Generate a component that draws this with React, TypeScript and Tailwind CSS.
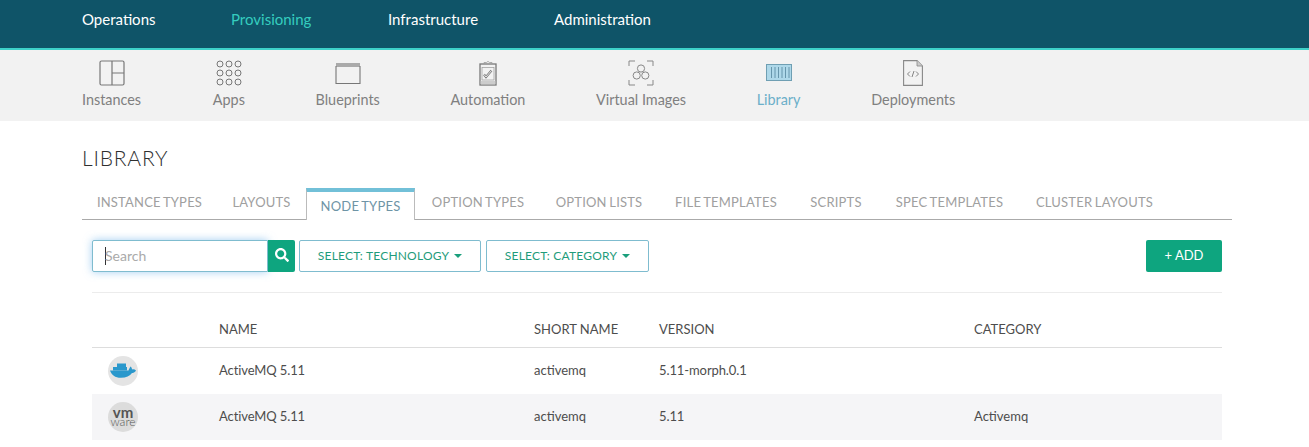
import { FaSearch } from "react-icons/fa";

const TOP_NAV = [
  { label: "Operations", width: "w-[149px]" },
  { label: "Provisioning", width: "w-[157px]", active: true },
  { label: "Infrastructure", width: "w-[166px]" },
  { label: "Administration", width: "w-auto" },
];

const TABS = [
  { label: "INSTANCE TYPES", width: "w-[135px]" },
  { label: "LAYOUTS", width: "w-[89px]" },
  { label: "NODE TYPES", width: "w-[109px]", active: true },
  { label: "OPTION TYPES", width: "w-[126px]" },
  { label: "OPTION LISTS", width: "w-[116px]" },
  { label: "FILE TEMPLATES", width: "w-[138px]" },
  { label: "SCRIPTS", width: "w-[82px]" },
  { label: "SPEC TEMPLATES", width: "w-[145px]" },
  { label: "CLUSTER LAYOUTS", width: "w-[145px]" },
];

function InstancesIcon() {
  return (
    <svg width="26" height="26" viewBox="0 0 26 26" fill="none" stroke="#777" strokeWidth="1.2">
      <rect x="1" y="1" width="24" height="24" rx="1.5" />
      <path d="M13 1v24M13 13h12" />
    </svg>
  );
}

function AppsIcon() {
  const dots = [4, 13, 22];
  return (
    <svg width="26" height="26" viewBox="0 0 26 26" fill="none" stroke="#777" strokeWidth="1">
      {dots.map((y) =>
        dots.map((x) => <circle key={`${x}-${y}`} cx={x} cy={y} r="3" />),
      )}
    </svg>
  );
}

function BlueprintsIcon() {
  return (
    <svg width="26" height="26" viewBox="0 0 26 26" fill="none">
      <rect x="1" y="3" width="24" height="4" fill="#aaa" />
      <path d="M1 6v17.500h24V6" stroke="#777" strokeWidth="1.1" />
    </svg>
  );
}

function AutomationIcon() {
  return (
    <svg width="26" height="26" viewBox="0 0 26 26" fill="none" stroke="#777">
      <rect x="5" y="4" width="16" height="21" strokeWidth="1.3" />
      <path d="M9 4V2.500h2.500a1.700 1.700 0 0 1 3 0H17V4" strokeWidth="0.8" stroke="#999" />
      <rect x="7" y="7.500" width="12" height="12.500" strokeWidth="0.7" stroke="#999" />
      <path d="M9 14.500l2 2.500 5.500-6.500" strokeWidth="2.200" />
      <path d="M9 14.500l2 2.500 5.500-6.500" strokeWidth="0.9" stroke="#f2f2f2" />
      <rect x="5.700" y="21" width="14.600" height="3.300" fill="#ccc" stroke="none" />
    </svg>
  );
}

function VirtualImagesIcon() {
  return (
    <svg width="26" height="26" viewBox="0 0 26 26" fill="none" stroke="#888" strokeWidth="1">
      <path d="M1 6V1h6M19 1h6v5M25 20v5h-6M7 25H1v-5" />
      <circle cx="13" cy="8.500" r="3.600" />
      <circle cx="8.700" cy="15.500" r="3.600" />
      <circle cx="17.300" cy="15.500" r="3.600" />
    </svg>
  );
}

function LibraryIcon() {
  return (
    <svg width="26" height="17" viewBox="0 0 26 17" fill="none">
      <rect x="0.500" y="0.500" width="25" height="16" fill="#aed8e9" stroke="#6f9fb3" />
      <path d="M5.500 3v11M9 3v11M12.500 3v11M16 3v11M19.500 3v11M23 3v11" stroke="#5f8fa5" strokeWidth="0.9" />
    </svg>
  );
}

function DeploymentsIcon() {
  return (
    <svg width="20" height="26" viewBox="0 0 20 26" fill="none" stroke="#888">
      <path d="M0.600 0.600H14L19.400 6V25.400H0.600Z" strokeWidth="1.100" />
      <path d="M14 0.600V6H19.400" fill="#ccc" strokeWidth="0.800" />
      <path d="M7 11.500l-2.500 2.500L7 16.500M13 11.500l2.500 2.500-2.500 2.500M11 11l-2 6" stroke="#666" strokeWidth="0.800" />
    </svg>
  );
}

const SUB_NAV = [
  { label: "Instances", icon: <InstancesIcon /> },
  { label: "Apps", icon: <AppsIcon />, nudge: "ml-[1px]" },
  { label: "Blueprints", icon: <BlueprintsIcon /> },
  { label: "Automation", icon: <AutomationIcon /> },
  { label: "Virtual Images", icon: <VirtualImagesIcon /> },
  { label: "Library", icon: <LibraryIcon />, active: true },
  { label: "Deployments", icon: <DeploymentsIcon /> },
];

const ROWS = [
  { logo: "docker", height: "h-[47px]", name: "ActiveMQ 5.11", shortName: "activemq", version: "5.11-morph.0.1", category: "" },
  { logo: "vmware", height: "h-[46px]", name: "ActiveMQ 5.11", shortName: "activemq", version: "5.11", category: "Activemq" },
];

function Caret() {
  return <span className="ml-[5px] inline-block h-0 w-0 border-x-4 border-t-4 border-x-transparent border-t-[#1a9f7c]" />;
}

function SelectButton({ label, width }: { label: string; width: string }) {
  return (
    <button
      type="button"
      className={`${width} flex h-8 items-center justify-center rounded-[2px] border border-[#7fbccf] bg-white text-[12px] tracking-[0.2px] text-[#1f9c7b]`}
    >
      {label}
      <Caret />
    </button>
  );
}

function RowLogo({ kind }: { kind: string }) {
  if (kind === "docker") {
    return (
      <div className="flex h-[30px] w-[30px] items-center justify-center rounded-full bg-[#e4e4e4]">
        <svg width="26" height="15" viewBox="0 0 26 15" fill="#2a98cc">
          <path d="M0 7.500H18.500C19 6 20 4 20.500 3.500C21.500 4.200 22 5.500 22 6.500C23.500 6 25 6.500 26 7.500C25 9.500 23 10 22 10C20 13 16 14.800 11 14.800C5 14.800 1.500 12 0 7.500Z" />
          <path d="M3 4H17V7.500H3ZM7 0.500H16V4H7Z" />
        </svg>
      </div>
    );
  }
  return (
    <div className="h-[30px] w-[30px] rounded-full bg-[#dcdcdc]">
      <svg width="30" height="30" viewBox="0 0 30 30" fill="#555" textAnchor="middle">
        <text x="15" y="15.500" fontSize="15" fontWeight="700">vm</text>
        <text x="15" y="24" fontSize="12" fontWeight="300">ware</text>
      </svg>
    </div>
  );
}

export default function App() {
  return (
    <div className="h-[447px] overflow-hidden bg-white font-['Lato',sans-serif]">
      {/* Top nav */}
      <div className="flex h-[50px] items-start border-b-[2px] border-[#3ed1c9] bg-[#0f5468] pt-[10px] pl-[82px] text-[15px] leading-[18px]">
        {TOP_NAV.map((item) => (
          <span
            key={item.label}
            className={`${item.width} ${item.active ? "text-[#35cdbf]" : "text-white"}`}
          >
            {item.label}
          </span>
        ))}
      </div>

      {/* Section nav */}
      <div className="flex h-[71px] gap-[70.700px] bg-[#f2f2f2] pl-[82px] text-[14.400px] leading-[18px]">
        {SUB_NAV.map((item) => (
          <div key={item.label} className={`flex flex-col items-center ${item.nudge ?? ""}`}>
            <div className="flex h-[44px] items-center pt-[1px]">{item.icon}</div>
            <span className={`mt-[-3px] ${item.active ? "text-[#6bafc9]" : "text-[#808080]"}`}>
              {item.label}
            </span>
          </div>
        ))}
      </div>

      <div className="pr-[77px] pl-[82px]">
        <h1 className="pt-[26px] text-[21px] leading-[22px] font-light tracking-[0.8px] text-[#2f2f2f]">LIBRARY</h1>

        {/* Tabs */}
        <div className="mt-[19px] flex h-[32px] items-end border-b border-[#aaa] tracking-[0.2px] [word-spacing:-1px]">
          {TABS.map((tab) =>
            tab.active ? (
              <div
                key={tab.label}
                className={`${tab.width} relative top-[1px] flex h-[32px] items-center justify-center border-x border-t-4 border-x-[#bbb] border-t-[#72c0d8] bg-white pt-[1px] text-[13px] text-[#6e94a6]`}
              >
                {tab.label}
              </div>
            ) : (
              <div
                key={tab.label}
                className={`${tab.width} flex h-[31px] shrink-0 items-center justify-center pb-[2px] text-[13px] text-[#a0a0a0]`}
              >
                {tab.label}
              </div>
            ),
          )}
        </div>

        <div className="pl-[10px] pr-[10px]">
          {/* Toolbar */}
          <div className="flex items-center pt-[20px] pb-[20px] border-b border-[#ececec]">
            <div className="flex h-8 w-[176px] items-center rounded-l-[2px] border border-[#7fbccf] bg-white pl-[12px] text-[14px] text-[#aaa] shadow-[0_0_8px_rgba(102,175,233,0.6)]">
              <span className="h-[18px] w-px bg-[#333]" />
              <span className="ml-[-1px] pb-[2px]">Search</span>
            </div>
            <button
              type="button"
              className="flex h-8 w-[27px] items-start justify-center rounded-r-[2px] bg-[#0ea57f] pt-[8px] text-white"
            >
              <FaSearch className="text-[14px]" />
            </button>
            <div className="ml-[4px]">
              <SelectButton label="SELECT: TECHNOLOGY" width="w-[182px]" />
            </div>
            <div className="ml-[5px]">
              <SelectButton label="SELECT: CATEGORY" width="w-[163px]" />
            </div>
            <button
              type="button"
              className="ml-auto h-8 w-[76px] rounded-[2px] bg-[#0ea57f] text-[13px] text-white"
            >
              + ADD
            </button>
          </div>

          {/* Table */}
          <table className="w-full table-fixed border-collapse text-[13px] text-[#4d4d4d]">
            <thead>
              <tr className="h-[54px] border-b border-[#ddd] text-left">
                <th className="w-[127px]" />
                <th className="w-[315px] pt-[20px] font-normal">NAME</th>
                <th className="w-[125px] pt-[20px] font-normal">SHORT NAME</th>
                <th className="w-[315px] pt-[20px] font-normal">VERSION</th>
                <th className="pt-[20px] font-normal">CATEGORY</th>
              </tr>
            </thead>
            <tbody>
              {ROWS.map((row, i) => (
                <tr key={row.logo} className={`${row.height} ${i % 2 === 1 ? "bg-[#f5f5f7]" : "bg-white"}`}>
                  <td className="pl-[16px]">
                    <RowLogo kind={row.logo} />
                  </td>
                  <td className="tracking-[-0.1px]">{row.name}</td>
                  <td>{row.shortName}</td>
                  <td className="tracking-[-0.1px]">{row.version}</td>
                  <td>{row.category}</td>
                </tr>
              ))}
            </tbody>
          </table>
        </div>
      </div>
    </div>
  );
}
